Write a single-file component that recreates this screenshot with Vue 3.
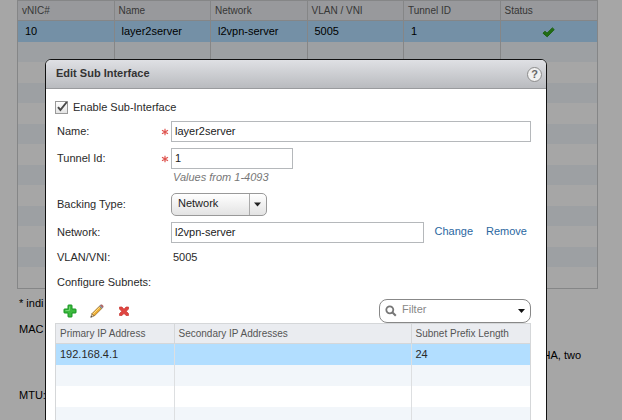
<script setup>
import { ref } from 'vue'

const enabled = ref(true)
const name = ref('layer2server')
const tunnelId = ref('1')
const backingType = ref('Network')
const network = ref('l2vpn-server')
const filter = ref('')

const vnicHeads = ['vNIC#', 'Name', 'Network', 'VLAN / VNI', 'Tunnel ID', 'Status']
const vnicCells = ['10', 'layer2server', 'l2vpn-server', '5005', '1']
const subnetHeads = ['Primary IP Address', 'Secondary IP Addresses', 'Subnet Prefix Length']
const subnetCells = ['192.168.4.1', '', '24']
</script>

<template>
  <div class="screen">
    <main class="page">
      <table class="grid vnics">
        <thead>
          <tr><th v-for="h in vnicHeads" :key="h">{{ h }}</th></tr>
        </thead>
        <tbody>
          <tr class="selected">
            <td v-for="c in vnicCells" :key="c">{{ c }}</td>
            <td class="status">
              <svg width="13" height="11" viewBox="0 0 13 11" role="img" aria-label="OK">
                <path d="M1 6.2 3 4.2 5 6.2 10.4 .9 12.2 2.6 5.2 9.8Z" fill="#33a81f" stroke="#2b9418" />
              </svg>
            </td>
          </tr>
          <tr v-for="r in 12" :key="r"><td v-for="c in 6" :key="c"></td></tr>
        </tbody>
      </table>
      <p class="note">* indi</p>
      <p class="note">MAC</p>
      <p class="note tail">HA, two</p>
      <p class="note last">MTU:</p>
    </main>

    <div class="shade"></div>

    <section class="dialog" role="dialog" aria-labelledby="dialog-title">
      <header class="titlebar">
        <h1 id="dialog-title">Edit Sub Interface</h1>
        <button class="help" type="button">?</button>
      </header>

      <form class="content" @submit.prevent>
        <label class="enable">
          <span class="box">
            <input v-model="enabled" type="checkbox" />
            <svg v-if="enabled" width="13" height="13" viewBox="0 0 13 13" aria-hidden="true">
              <path d="M3 6.2 5.4 9 11.8 1" fill="none" stroke="#4a4a4a" stroke-width="2" />
            </svg>
          </span>
          Enable Sub-Interface
        </label>

        <div class="row">
          <label for="name">Name:</label>
          <svg class="star" viewBox="0 0 8 8" aria-hidden="true"><path d="M4 .8V7.2M1 2.3 7 5.7M7 2.3 1 5.7" /></svg>
          <input id="name" v-model="name" type="text" />
        </div>
        <div class="row">
          <label for="tunnel">Tunnel Id:</label>
          <svg class="star" viewBox="0 0 8 8" aria-hidden="true"><path d="M4 .8V7.2M1 2.3 7 5.7M7 2.3 1 5.7" /></svg>
          <input id="tunnel" v-model="tunnelId" class="short" type="text" />
        </div>
        <p class="hint">Values from 1-4093</p>
        <div class="row">
          <label for="backing">Backing Type:</label>
          <span class="select">
            <select id="backing" v-model="backingType"><option>Network</option></select>
            <svg width="18" height="23" viewBox="0 0 18 23" aria-hidden="true">
              <path d="M.5 1V22" stroke="#aaa" />
              <path d="M5 9.5H12L8.5 13.5Z" fill="#222" />
            </svg>
          </span>
        </div>
        <div class="row">
          <label for="network">Network:</label>
          <span class="network">
            <input id="network" v-model="network" type="text" />
            <a href="#change">Change</a>
            <a href="#remove">Remove</a>
          </span>
        </div>
        <div class="row plain">
          <span>VLAN/VNI:</span>
          <span class="value">5005</span>
        </div>
        <div class="row plain"><span>Configure Subnets:</span></div>

        <div class="toolbar">
          <button type="button" aria-label="Add">
            <svg width="14" height="14" viewBox="0 0 14 14">
              <path d="M5 1.5Q5 1 5.5 1H8.5Q9 1 9 1.5V5H12.5Q13 5 13 5.5V8.5Q13 9 12.5 9H9V12.5Q9 13 8.5 13H5.5Q5 13 5 12.5V9H1.5Q1 9 1 8.5V5.5Q1 5 1.5 5H5Z" fill="#3cb93e" stroke="#169421" />
              <path d="M6.5 2.5V6.5H2.5" fill="none" stroke="#72d573" />
            </svg>
          </button>
          <button type="button" aria-label="Edit">
            <svg width="14" height="14" viewBox="0 0 14 14">
              <path d="M.8 13.2 2 9.6 4.3 12Z" fill="#e9cda0" stroke="#665540" stroke-width=".6" />
              <path d="M2 9.6 9.4 2.2 11.8 4.5 4.3 12Z" fill="#efae34" stroke="#896322" stroke-width=".7" />
              <path d="M3.2 9.8 9.8 3.2" stroke="#ffdf87" />
              <path d="M9.4 2.2 10.4 1.2 12.8 3.5 11.8 4.5Z" fill="#9ca5ae" stroke="#666c75" stroke-width=".5" />
              <path d="M10.4 1.2Q11.4 .2 12.6 1.2 13.8 2.4 12.8 3.5Z" fill="#c86362" stroke="#8d5757" stroke-width=".5" />
              <path d="M.5 13.5 1.1 12 2.2 13Z" fill="#333" />
            </svg>
          </button>
          <button type="button" aria-label="Delete">
            <svg width="14" height="14" viewBox="0 0 14 14">
              <path d="M2.5 3H5L7 5.2 9 3H11.5V5L9.3 7.3 11.5 9.6V11.5H9L7 9.4 5 11.5H2.5V9.6L4.7 7.3 2.5 5Z" fill="#df4541" stroke="#c83631" stroke-width=".7" />
            </svg>
          </button>
          <label class="filter">
            <svg width="12" height="12" viewBox="0 0 12 12" aria-hidden="true">
              <circle cx="4.8" cy="4.8" r="3.5" fill="none" stroke="#777" stroke-width="1.8" />
              <path d="M7.5 7.5 10.8 10.8" stroke="#777" stroke-width="2" />
            </svg>
            <input v-model="filter" type="text" placeholder="Filter" aria-label="Filter" />
            <svg width="7" height="4" viewBox="0 0 7 4" aria-hidden="true"><path d="M0 0H7L3.5 4Z" fill="#111" /></svg>
          </label>
        </div>

        <table class="grid subnets">
          <colgroup><col class="quarter" /><col /><col class="quarter" /></colgroup>
          <thead>
            <tr><th v-for="h in subnetHeads" :key="h">{{ h }}</th></tr>
          </thead>
          <tbody>
            <tr class="selected"><td v-for="(c, i) in subnetCells" :key="i">{{ c }}</td></tr>
            <tr v-for="r in 4" :key="r"><td v-for="c in 3" :key="c"></td></tr>
          </tbody>
        </table>
      </form>
    </section>
  </div>
</template>

<style>
body {
  margin: 0;
  background: #fff;
}
</style>

<style scoped>
* {
  box-sizing: border-box;
}
.screen {
  position: relative;
  height: 100vh;
  overflow: hidden;
  font-family: "Liberation Sans", Arial, sans-serif;
  font-size: 11px;
  line-height: 16px;
  color: #2a2a2a;
}
.page {
  padding: 0 24px 0 17px;
  color: #000;
}
.shade {
  position: absolute;
  inset: 0;
  background: rgba(0, 0, 0, 0.35);
}

.grid {
  width: 100%;
  table-layout: fixed;
  border-collapse: separate;
  border-spacing: 0;
  border: 1px solid #d5d7d9;
}
.grid th {
  height: 20px;
  padding: 0 4px;
  border-right: 1px solid #d5d7d9;
  border-bottom: 1px solid #d5d7d9;
  background: #eaecf0;
  color: #555;
  font-size: 10px;
  font-weight: normal;
  line-height: 16px;
  text-align: left;
  white-space: nowrap;
}
.grid td {
  height: 21px;
  padding: 0 4px;
  border-right: 1px solid #dddfe1;
  line-height: 16px;
}
.grid th:last-child,
.grid td:last-child {
  border-right: 0;
}
.grid tbody tr:nth-child(even) td {
  background: #f2f6fa;
}
.grid tbody tr.selected td {
  background: #b2deff;
}
.vnics,
.vnics th,
.vnics td {
  border-color: #ccced0;
}
.vnics td {
  padding: 0 7px 2px;
}
.vnics tbody tr:nth-child(even) td {
  height: 20px;
}
.vnics .status {
  padding-bottom: 0;
}
.vnics .status svg {
  display: block;
  margin: 1px auto 0;
}
.subnets td {
  padding-bottom: 2px;
}
.quarter {
  width: 25%;
}

.note {
  margin: 6px 2px 10px;
}
.note + .note {
  margin: 10px 2px;
}
.note.tail {
  padding-right: 15px;
  text-align: right;
}
.note.last {
  margin-top: 24px;
}

.dialog {
  position: absolute;
  top: 59px;
  right: 75px;
  bottom: -8px;
  left: 45px;
  overflow: hidden;
  border: 1px solid #111;
  border-radius: 6px;
  background: #fff;
}
.titlebar {
  display: flex;
  align-items: center;
  justify-content: space-between;
  height: 29px;
  padding: 0 4px 0 10px;
  border-bottom: 1px solid #999b9e;
  background: linear-gradient(#dfe0e4, #b9bbbf);
}
.titlebar h1 {
  margin: 0;
  padding-bottom: 2px;
  color: #333;
  font-size: 11px;
  line-height: 16px;
}
.help {
  width: 15px;
  height: 15px;
  padding: 0;
  border: 1px solid #8b8b8b;
  border-radius: 50%;
  background: #f1f1f1;
  color: #666;
  font: bold 11px/13px "Liberation Sans", Arial, sans-serif;
}

.content {
  display: flex;
  flex-direction: column;
  padding: 8px 15px 0 9px;
}
.enable {
  display: flex;
  gap: 5px;
  align-items: center;
  height: 20px;
  margin-bottom: 4px;
}
.box {
  display: grid;
}
.box > * {
  grid-area: 1 / 1;
}
.box input {
  width: 13px;
  height: 13px;
  margin: 0;
  border: 1px solid #999;
  background: linear-gradient(#fff, #e4e4e4);
  appearance: none;
}
.box svg {
  pointer-events: none;
}
.row {
  display: grid;
  grid-template-columns: 106px 10px 1fr;
  align-items: center;
  margin-bottom: 6px;
}
.row > :first-child {
  grid-column: 1 / 3;
  grid-row: 1;
  padding: 0 0 2px 2px;
}
.row > :last-child:not(:first-child) {
  grid-column: 3;
}
.star {
  grid-column: 2;
  grid-row: 1;
  width: 8px;
  height: 8px;
  fill: none;
  stroke: #df5550;
  stroke-width: 1.2;
}
.row input {
  width: 100%;
  min-width: 0;
  height: 21px;
  padding: 0 3px 1px;
  border: 1px solid #b5b8bb;
  border-radius: 0;
  background: #fff;
  color: #222;
  font: inherit;
}
.row .short {
  width: 122px;
}
.hint {
  margin: -6px 0 8px 118px;
  color: #777;
  font-style: italic;
}
.select {
  display: grid;
  justify-self: start;
  width: 96px;
}
.select > * {
  grid-area: 1 / 1;
}
.select select {
  height: 23px;
  padding: 0 20px 4px 6px;
  border: 1px solid #999;
  border-radius: 5px;
  background: linear-gradient(#fff, #e3e3e3);
  color: #222;
  font: inherit;
  appearance: none;
}
.select svg {
  justify-self: end;
  pointer-events: none;
}
.network {
  display: flex;
  align-items: center;
}
.network input {
  flex: 1;
  margin-right: 10px;
}
a {
  padding-bottom: 4px;
  color: #2a679f;
  text-decoration: none;
}
.network a + a {
  margin: 0 4px 0 13px;
}
.plain {
  align-items: start;
  height: 20px;
  margin-bottom: 5px;
}
.value {
  padding-left: 2px;
}

.toolbar {
  display: flex;
  gap: 13px;
  align-items: center;
  height: 24px;
  padding-left: 8px;
}
.toolbar button {
  width: 14px;
  height: 14px;
  padding: 0;
  border: 0;
  background: none;
}
.toolbar svg {
  display: block;
}
.filter {
  display: flex;
  gap: 5px;
  align-items: center;
  width: 152px;
  height: 24px;
  margin-left: auto;
  padding: 0 5px;
  border: 1px solid #888;
  border-radius: 8px;
}
.filter input {
  flex: 1;
  min-width: 0;
  padding: 0 0 4px;
  border: 0;
  outline: 0;
  background: none;
  color: #222;
  font: inherit;
}
.filter input::placeholder {
  color: #888;
}
</style>
